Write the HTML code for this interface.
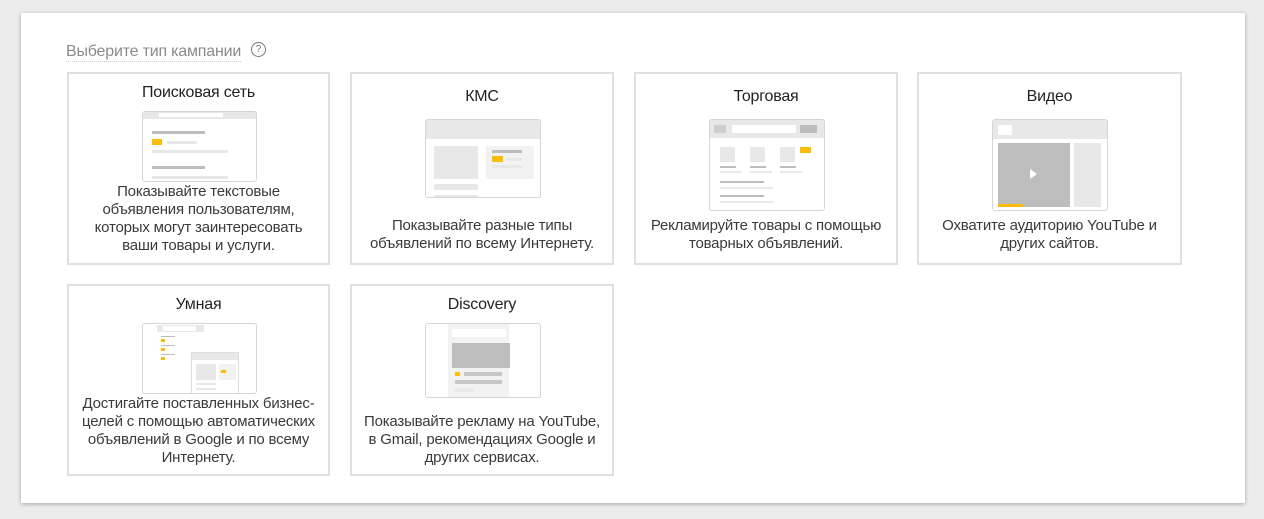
<!DOCTYPE html>
<html><head><meta charset="utf-8"><style>
*{box-sizing:border-box;margin:0;padding:0}
body{width:1264px;height:519px;background:#ececec;font-family:"Liberation Sans",sans-serif;position:relative;overflow:hidden}
.panel{position:absolute;left:21px;top:13px;width:1224px;height:490px;background:#fff;box-shadow:0 1px 4px rgba(0,0,0,.3)}
.hdr{position:absolute;left:66px;top:43px;font-size:16px;color:#8a8a8a;border-bottom:1px dotted #ccc;line-height:18px;letter-spacing:-0.2px}
.q{position:absolute;left:251px;top:42px;width:15px;height:15px;border:1.3px solid #777;border-radius:50%;font-size:10px;color:#777;text-align:center;line-height:13px}
.card{position:absolute;border:2px solid #e0e0e0;background:#fff}
.t{position:absolute;left:0;right:0;text-align:center;font-size:16px;color:#222;letter-spacing:-0.2px}
.d{position:absolute;left:0;right:0;text-align:center;font-size:15px;line-height:18px;color:#3a3a3a;letter-spacing:-0.2px}
.img{position:absolute;border:1px solid #d6d6d6;border-radius:3px;background:#fff;overflow:hidden}
.b{position:absolute}
.g1{background:#bdbdbd}.g2{background:#e8e8e8}.g3{background:#f2f2f2}.y{background:#fbbc04}
</style></head><body>
<div class="panel"></div>
<div class="hdr">Выберите тип кампании</div>
<div class="q">?</div>

<div class="card" style="left:67px;top:72px;width:263px;height:193px">
 <div class="t" style="top:10px">Поисковая сеть</div>
 <div class="img" style="left:73px;top:37px;width:115px;height:71px">
  <div class="b g2" style="left:0;top:0;width:115px;height:7px"></div>
  <div class="b" style="left:16px;top:1px;width:64px;height:4px;background:#fff"></div>
  <div class="b g1" style="left:9px;top:19px;width:53px;height:3px"></div>
  <div class="b y" style="left:9px;top:27px;width:10px;height:6px"></div>
  <div class="b g2" style="left:24px;top:29px;width:30px;height:3px"></div>
  <div class="b g2" style="left:9px;top:38px;width:76px;height:3px"></div>
  <div class="b g1" style="left:9px;top:54px;width:53px;height:3px"></div>
  <div class="b g2" style="left:9px;top:64px;width:76px;height:3px"></div>
 </div>
 <div class="d" style="top:109px">Показывайте текстовые<br>объявления пользователям,<br>которых могут заинтересовать<br>ваши товары и услуги.</div>
</div>

<div class="card" style="left:350px;top:72px;width:264px;height:193px">
 <div class="t" style="top:14px">КМС</div>
 <div class="img" style="left:73px;top:45px;width:116px;height:79px">
  <div class="b g2" style="left:0;top:0;width:116px;height:19px"></div>
  <div class="b g2" style="left:8px;top:26px;width:44px;height:33px"></div>
  <div class="b g3" style="left:60px;top:26px;width:48px;height:33px"></div>
  <div class="b g1" style="left:66px;top:30px;width:30px;height:3px"></div>
  <div class="b y" style="left:66px;top:36px;width:11px;height:6px"></div>
  <div class="b g2" style="left:80px;top:38px;width:16px;height:3px"></div>
  <div class="b g2" style="left:66px;top:45px;width:30px;height:3px"></div>
  <div class="b g2" style="left:8px;top:64px;width:44px;height:6px"></div>
  <div class="b g2" style="left:8px;top:75px;width:44px;height:6px"></div>
 </div>
 <div class="d" style="top:143px">Показывайте разные типы<br>объявлений по всему Интернету.</div>
</div>

<div class="card" style="left:634px;top:72px;width:264px;height:193px">
 <div class="t" style="top:14px">Торговая</div>
 <div class="img" style="left:73px;top:45px;width:116px;height:92px">
  <div class="b g2" style="left:0;top:0;width:116px;height:18px"></div>
  <div class="b" style="left:22px;top:5px;width:64px;height:8px;background:#fff"></div>
  <div class="b g1" style="left:4px;top:5px;width:12px;height:8px;opacity:.6"></div>
  <div class="b g1" style="left:90px;top:5px;width:17px;height:8px"></div>
  <div class="b g2" style="left:10px;top:27px;width:15px;height:15px"></div>
  <div class="b g2" style="left:40px;top:27px;width:15px;height:15px"></div>
  <div class="b g2" style="left:70px;top:27px;width:15px;height:15px"></div>
  <div class="b y" style="left:90px;top:27px;width:11px;height:6px"></div>
  <div class="b g1" style="left:10px;top:46px;width:16px;height:2px"></div>
  <div class="b g1" style="left:40px;top:46px;width:16px;height:2px"></div>
  <div class="b g1" style="left:70px;top:46px;width:16px;height:2px"></div>
  <div class="b g2" style="left:10px;top:51px;width:22px;height:2px"></div>
  <div class="b g2" style="left:40px;top:51px;width:22px;height:2px"></div>
  <div class="b g2" style="left:70px;top:51px;width:22px;height:2px"></div>
  <div class="b g1" style="left:10px;top:61px;width:44px;height:2px"></div>
  <div class="b g2" style="left:10px;top:67px;width:53px;height:2px"></div>
  <div class="b g1" style="left:10px;top:75px;width:44px;height:2px"></div>
  <div class="b g2" style="left:10px;top:81px;width:53px;height:2px"></div>
 </div>
 <div class="d" style="top:143px">Рекламируйте товары с помощью<br>товарных объявлений.</div>
</div>

<div class="card" style="left:917px;top:72px;width:265px;height:193px">
 <div class="t" style="top:14px">Видео</div>
 <div class="img" style="left:73px;top:45px;width:116px;height:92px">
  <div class="b g2" style="left:0;top:0;width:116px;height:19px"></div>
  <div class="b" style="left:5px;top:5px;width:14px;height:10px;background:#fff;border-radius:2px"></div>
  <div class="b g1" style="left:5px;top:23px;width:72px;height:64px"></div>
  <div class="b y" style="left:5px;top:84px;width:25px;height:3px"></div>
  <div class="b" style="left:37px;top:49px;width:0;height:0;border-left:7px solid #fff;border-top:5px solid transparent;border-bottom:5px solid transparent"></div>
  <div class="b g2" style="left:81px;top:23px;width:27px;height:64px"></div>
 </div>
 <div class="d" style="top:143px">Охватите аудиторию YouTube и<br>других сайтов.</div>
</div>

<div class="card" style="left:67px;top:284px;width:263px;height:192px">
 <div class="t" style="top:10px">Умная</div>
 <div class="img" style="left:73px;top:37px;width:115px;height:71px">
  <div class="b g2" style="left:14px;top:1px;width:47px;height:7px"></div>
  <div class="b" style="left:20px;top:2px;width:33px;height:5px;background:#fff"></div>
  <div class="b g1" style="left:18px;top:12px;width:14px;height:1px"></div>
  <div class="b y" style="left:18px;top:15px;width:4px;height:3px"></div>
  <div class="b g1" style="left:18px;top:21px;width:14px;height:1px"></div>
  <div class="b y" style="left:18px;top:24px;width:4px;height:3px"></div>
  <div class="b g1" style="left:18px;top:30px;width:14px;height:1px"></div>
  <div class="b y" style="left:18px;top:33px;width:4px;height:3px"></div>
  <div class="b" style="left:48px;top:28px;width:48px;height:43px;border:1px solid #ddd;background:#fff"></div>
  <div class="b g2" style="left:49px;top:29px;width:46px;height:7px"></div>
  <div class="b g2" style="left:53px;top:40px;width:20px;height:16px"></div>
  <div class="b g3" style="left:76px;top:40px;width:17px;height:16px"></div>
  <div class="b y" style="left:78px;top:46px;width:5px;height:3px"></div>
  <div class="b g2" style="left:53px;top:59px;width:20px;height:2px"></div>
  <div class="b g2" style="left:53px;top:64px;width:20px;height:2px"></div>
 </div>
 <div class="d" style="top:109px">Достигайте поставленных бизнес-<br>целей с помощью автоматических<br>объявлений в Google и по всему<br>Интернету.</div>
</div>

<div class="card" style="left:350px;top:284px;width:264px;height:192px">
 <div class="t" style="top:10px">Discovery</div>
 <div class="img" style="left:73px;top:37px;width:116px;height:75px">
  <div class="b g3" style="left:22px;top:0;width:61px;height:75px"></div>
  <div class="b" style="left:26px;top:5px;width:54px;height:8px;background:#fff"></div>
  <div class="b g1" style="left:26px;top:19px;width:58px;height:25px"></div>
  <div class="b y" style="left:29px;top:48px;width:5px;height:4px"></div>
  <div class="b g1" style="left:38px;top:48px;width:38px;height:4px;opacity:.8"></div>
  <div class="b g1" style="left:29px;top:56px;width:47px;height:4px;opacity:.8"></div>
  <div class="b g2" style="left:29px;top:64px;width:19px;height:4px"></div>
 </div>
 <div class="d" style="top:127px">Показывайте рекламу на YouTube,<br>в Gmail, рекомендациях Google и<br>других сервисах.</div>
</div>
</body></html>
